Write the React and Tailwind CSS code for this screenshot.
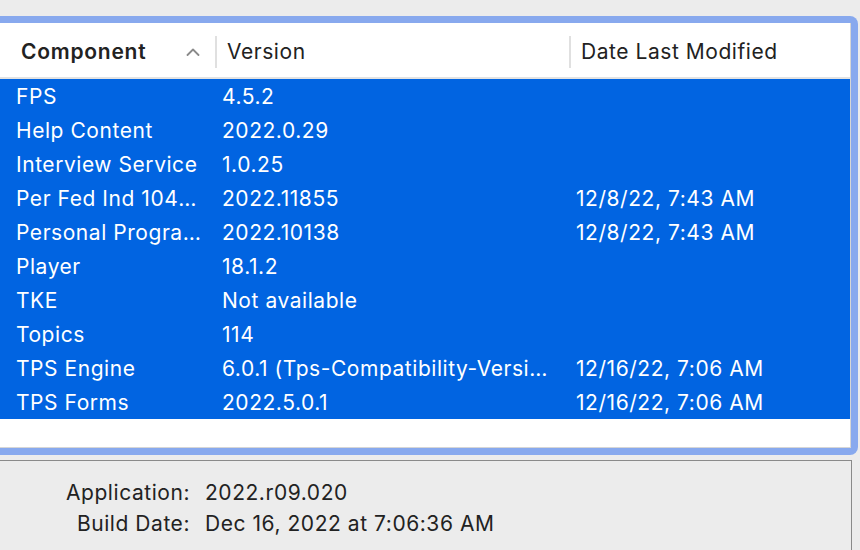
const rows = [
  { name: 'FPS', version: '4.5.2', date: '' },
  { name: 'Help Content', version: '2022.0.29', date: '' },
  { name: 'Interview Service', version: '1.0.25', date: '' },
  { name: 'Per Fed Ind 1040 Program', version: '2022.11855', date: '12/8/22, 7:43 AM' },
  { name: 'Personal Program Data', version: '2022.10138', date: '12/8/22, 7:43 AM' },
  { name: 'Player', version: '18.1.2', date: '' },
  { name: 'TKE', version: 'Not available', date: '' },
  { name: 'Topics', version: '114', date: '' },
  { name: 'TPS Engine', version: '6.0.1 (Tps-Compatibility-Version 2022.1)', date: '12/16/22, 7:06 AM' },
  { name: 'TPS Forms', version: '2022.5.0.1', date: '12/16/22, 7:06 AM' },
];

function Chevron() {
  return (
    <svg width="14" height="8" viewBox="0 0 14 8" className="ml-auto mr-[15px]">
      <path d="M1.5 7L7 1.5L12.5 7" fill="none" stroke="#8a8a8a" strokeWidth="1.8" strokeLinecap="round" strokeLinejoin="round" />
    </svg>
  );
}

export default function App() {
  return (
    <div className="w-[860px] h-[550px] overflow-hidden bg-[#ececec] pt-[16px] font-['Inter','Liberation_Sans',sans-serif] text-[21px] tracking-[0.55px]">
      <div className="w-[858px] border-y-[7px] border-r-[7px] border-[#88a9ee] rounded-r-[8px]">
        <div className="bg-white border-b border-r border-[#d6d6d6]">
          {/* header */}
          <div className="flex h-[56px] items-center pt-[3px] border-b-2 border-[#e2e2e2] text-[#222]">
            <div className="flex w-[215px] items-center pl-[21px] font-semibold tracking-[0.75px]">
              <span>Component</span>
              <Chevron />
            </div>
            <div className="w-[2px] h-[32px] bg-[#e0e0e0]" />
            <div className="w-[352px] pl-[10px]">Version</div>
            <div className="w-[2px] h-[32px] bg-[#e0e0e0]" />
            <div className="flex-1 pl-[10px]">Date Last Modified</div>
          </div>
          {/* rows */}
          <div className="bg-[#0164e1] text-white">
            {rows.map((r) => (
              <div key={r.name} className="flex h-[34px] items-center pt-[1px]">
                <div className="w-[206px] pl-[16px] pr-[2px] truncate">{r.name}</div>
                <div className="w-[9px]" />
                <div className="w-[338px] pl-[7px] pr-[2px] truncate">{r.version}</div>
                <div className="w-[16px]" />
                <div className="flex-1 pl-[7px]">{r.date}</div>
              </div>
            ))}
          </div>
          <div className="h-[28px]" />
        </div>
      </div>
      <div className="mt-[5px] w-[852px] h-[120px] border-t border-r border-[#8a8a8a] pt-[16px] text-[#222]">
        <div className="grid grid-cols-[190px_1fr] gap-x-[15px] leading-[31px]">
          <div className="text-right">Application:</div>
          <div>2022.r09.020</div>
          <div className="text-right">Build Date:</div>
          <div>Dec 16, 2022 at 7:06:36 AM</div>
        </div>
      </div>
    </div>
  );
}
